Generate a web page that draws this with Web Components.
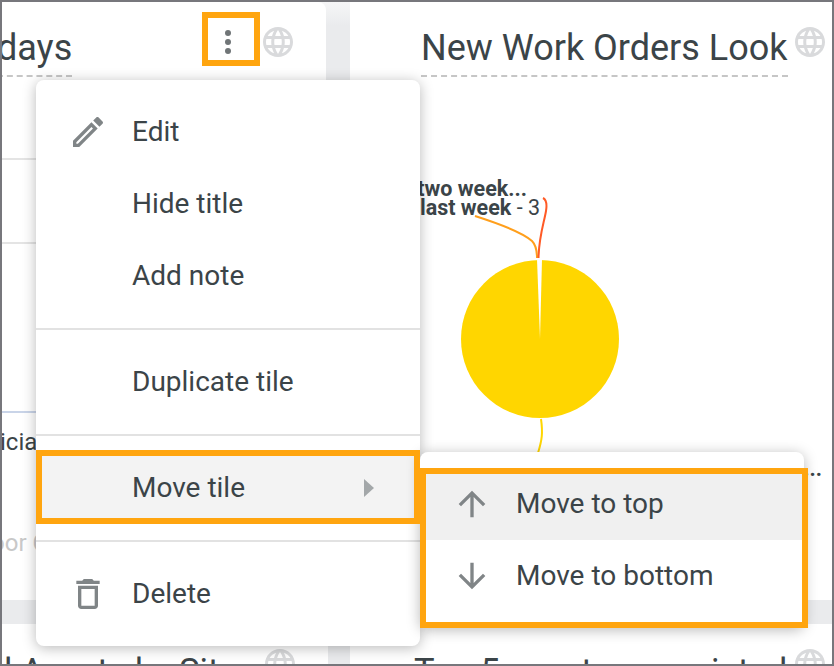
<!doctype html>
<html>
<head>
<meta charset="utf-8">
<style>
  html, body { margin: 0; height: 100%; }
  body { font-family: Roboto, sans-serif; color: #3b4448; overflow: hidden; }
  .cell { height: 82px; border-bottom: 2px solid #e4e4e4; font-size: 24px; white-space: nowrap; }
  .cell.first { height: 81px; }
  .cell.blue { border-bottom-color: #c9d4e8; height: 167px; }
  .cell.text { height: 40px; border: 0; padding-top: 15px; margin-left: -2px; }
  .cell.mute { color: #c8c8c8; border: 0; height: 30px; padding-top: 61px; margin-left: -11px; }
</style>
</head>
<body>
<template id="globe-tpl">
  <style>
    :host { display: block; width: 36px; height: 36px; }
    svg { display: block; fill: #d9dadc; }
  </style>
  <svg width="36" height="36" viewBox="0 0 24 24"><path d="M11.99 2C6.47 2 2 6.48 2 12s4.47 10 9.99 10C17.52 22 22 17.52 22 12S17.52 2 11.99 2zm6.93 6h-2.95c-.32-1.25-.78-2.45-1.38-3.56 1.84.63 3.37 1.91 4.33 3.56zM12 4.04c.83 1.2 1.48 2.53 1.91 3.96h-3.82c.43-1.43 1.08-2.76 1.91-3.96zM4.26 14C4.1 13.36 4 12.69 4 12s.1-1.36.26-2h3.38c-.08.66-.14 1.32-.14 2 0 .68.06 1.34.14 2H4.26zm.82 2h2.95c.32 1.25.78 2.45 1.38 3.56-1.84-.63-3.37-1.9-4.33-3.56zm2.95-8H5.08c.96-1.66 2.49-2.93 4.33-3.56C8.81 5.55 8.35 6.75 8.03 8zM12 19.96c-.83-1.2-1.48-2.53-1.91-3.96h3.82c-.43 1.43-1.08 2.76-1.91 3.96zM14.34 14H9.66c-.09-.66-.16-1.32-.16-2 0-.68.07-1.35.16-2h4.68c.09.65.16 1.32.16 2 0 .68-.07 1.34-.16 2zm.25 5.56c.6-1.11 1.06-2.31 1.38-3.56h2.95c-.96 1.65-2.49 2.93-4.33 3.56zM16.36 14c.08-.66.14-1.32.14-2 0-.68-.06-1.34-.14-2h3.38c.16.64.26 1.31.26 2s-.1 1.36-.26 2h-3.38z"/></svg>
</template>

<template id="tile-tpl">
  <style>
    :host { display: block; background: #fff; overflow: hidden; border-radius: var(--tile-radius, 0); }
    header { display: flex; align-items: flex-start; padding: 19px var(--globe-right, 4px) 0 var(--title-left, 0); height: 56px; }
    .title {
      height: 54px; font-size: var(--title-size, 36px); line-height: var(--title-line, 54px); white-space: nowrap;
      border-bottom: 2px dashed var(--title-rule, #c6c6c6); margin-left: var(--title-shift, 0);
    }
    .actions { flex: 1; margin-top: 1px; }
    x-globe { margin-top: 3px; }
  </style>
  <header>
    <div class="title"><slot name="title"></slot></div>
    <div class="actions"><slot name="actions"></slot></div>
    <x-globe></x-globe>
  </header>
  <slot></slot>
</template>

<template id="menu-tpl">
  <style>
    :host {
      display: block; position: absolute; box-sizing: border-box; background: #fff; border-radius: 8px;
      box-shadow: 0 2px 14px rgba(0, 0, 0, .28);
    }
    ::slotted(hr) { margin: 16px 0; border: 0; border-top: 2px solid #e2e2e2; }
  </style>
  <slot></slot>
</template>

<template id="item-tpl">
  <style>
    :host {
      display: flex; align-items: center; height: 72px; padding-left: 32px; font-size: 28px; color: #3b4448;
      background: var(--item-bg, transparent);
    }
    .icon { width: 40px; height: 40px; margin-right: 24px; flex: none; }
    ::slotted(svg) { display: block; fill: #808587; }
    .text { flex: 1; margin-top: -2px; }
    .after { margin-right: 46px; }
  </style>
  <div class="icon"><slot name="icon"></slot></div>
  <div class="text"><slot></slot></div>
  <div class="after"><slot name="after"></slot></div>
</template>

<template id="callout-tpl">
  <style>
    :host { display: block; position: absolute; box-sizing: border-box; border: 6px solid #ffa50f; pointer-events: none; }
  </style>
</template>

<template id="pie-tpl">
  <style>
    :host { display: block; margin-top: 1px; }
    svg { display: block; font-family: Roboto, sans-serif; font-size: 21.500px; fill: #3b4448; }
    .name { font-weight: 700; }
  </style>
  <svg width="482" height="480" viewBox="0 0 482 480">
    <circle cx="190" cy="261" r="79" fill="#ffd600"/>
    <path d="M187 181 L192 181 L190 261 Z" fill="#fff"/>
    <path d="M125 138 C150 146 172 154 182 163 C186 167 187 174 187 180" fill="none" stroke="#ff9f1c" stroke-width="2"/>
    <path d="M193 120 C197 122 197 127 196 133 C194 145 189 158 188.500 180" fill="none" stroke="#ff5a26" stroke-width="2"/>
    <path d="M191 341 C193 355 192 362 188 375" fill="none" stroke="#ffd600" stroke-width="2"/>
    <text x="177" y="118" text-anchor="end" class="name">two week...</text>
    <text x="190" y="136.500" text-anchor="end"><tspan class="name">last week</tspan> - 3</text>
    <text x="472" y="398" text-anchor="end" class="name">...</text>
  </svg>
</template>

<script>
  const mount = (host, id) => {
    host.attachShadow({ mode: 'open' }).appendChild(document.getElementById(id).content.cloneNode(true))
  }
  const define = (name, id) => {
    customElements.define(name, class extends HTMLElement {
      constructor() {
        super()
        mount(this, id)
      }
    })
  }
  define('x-globe', 'globe-tpl')
  define('x-tile', 'tile-tpl')
  define('x-menu', 'menu-tpl')
  define('x-menu-item', 'item-tpl')
  define('x-callout', 'callout-tpl')
  define('x-pie', 'pie-tpl')
</script>

<x-app-frame style="display:block;position:relative;box-sizing:border-box;width:834px;height:666px;border:2px solid #77777c;background:linear-gradient(#f6f6f7,#eaebed 24px);overflow:hidden">
  <div style="display:flex;justify-content:space-between;height:598px;margin-bottom:24px">
    <x-tile style="width:324px;--tile-radius:0 8px 0 0;--globe-right:30px;--title-shift:-5px">
      <span slot="title">days</span>
      <svg slot="actions" width="46" height="36" viewBox="0 0 46 36" style="display:block;margin:2px 0 0 133px" fill="#707577"><circle cx="23" cy="9" r="3"/><circle cx="23" cy="18" r="3"/><circle cx="23" cy="27" r="3"/></svg>
      <div class="cell first"></div>
      <div class="cell"></div>
      <div class="cell blue"></div>
      <div class="cell text">icia</div>
      <div class="cell mute">oor C</div>
    </x-tile>
    <x-tile style="width:482px;--title-left:71px">
      <span slot="title">New Work Orders Look</span>
      <x-pie></x-pie>
    </x-tile>
  </div>
  <div style="display:flex;justify-content:space-between;height:100px;--title-size:34.500px;--title-line:56px;--title-rule:transparent">
    <x-tile style="width:326px;--globe-right:30px;--title-left:2px">
      <span slot="title">l Assets by Site</span>
    </x-tile>
    <x-tile style="width:482px;--title-left:64px">
      <span slot="title">Top 5 assets associated</span>
    </x-tile>
  </div>

  <x-menu style="left:34px;top:78px;width:384px;height:566px;padding-top:16px">
    <x-menu-item>
      <svg slot="icon" width="40" height="40" viewBox="0 0 24 24"><path d="M14.06 9.02l.92.92L5.92 19H5v-.92l9.06-9.06M17.66 3c-.25 0-.51.1-.7.29l-1.83 1.83 3.75 3.75 1.83-1.83c.39-.39.39-1.02 0-1.41l-2.34-2.34c-.2-.2-.45-.29-.71-.29zm-3.6 3.19L3 17.25V21h3.75L17.81 9.94l-3.75-3.75z"/></svg>
      Edit
    </x-menu-item>
    <x-menu-item>Hide title</x-menu-item>
    <x-menu-item>Add note</x-menu-item>
    <hr>
    <x-menu-item>Duplicate tile</x-menu-item>
    <hr>
    <x-menu-item style="--item-bg:#f3f3f3">
      Move tile
      <svg slot="after" width="10" height="18" viewBox="0 0 10 18" style="fill:#a3a7a9"><path d="M0 0l10 9-10 9z"/></svg>
    </x-menu-item>
    <hr>
    <x-menu-item>
      <svg slot="icon" width="40" height="40" viewBox="0 0 24 24"><path d="M16 9v10H8V9h8m-1.5-6h-5l-1 1H5v2h14V4h-3.5l-1-1zM18 7H6v12c0 1.1.9 2 2 2h8c1.1 0 2-.9 2-2V7z"/></svg>
      Delete
    </x-menu-item>
  </x-menu>

  <x-menu style="left:418px;top:450px;width:384px;height:176px;padding-top:16px">
    <x-menu-item style="--item-bg:#f0f0f0">
      <svg slot="icon" width="40" height="40" viewBox="0 0 24 24"><path d="M4 12l1.41 1.41L11 7.83V20h2V7.83l5.58 5.59L20 12l-8-8-8 8z"/></svg>
      Move to top
    </x-menu-item>
    <x-menu-item>
      <svg slot="icon" width="40" height="40" viewBox="0 0 24 24"><path d="M20 12l-1.41-1.41L13 16.170V4h-2v12.170l-5.580-5.590L4 12l8 8 8-8z"/></svg>
      Move to bottom
    </x-menu-item>
  </x-menu>

  <x-callout style="left:200px;top:10px;width:58px;height:54px"></x-callout>
  <x-callout style="left:34px;top:448px;width:384px;height:74px"></x-callout>
  <x-callout style="left:418px;top:466px;width:388px;height:160px"></x-callout>
</x-app-frame>
</body>
</html>
